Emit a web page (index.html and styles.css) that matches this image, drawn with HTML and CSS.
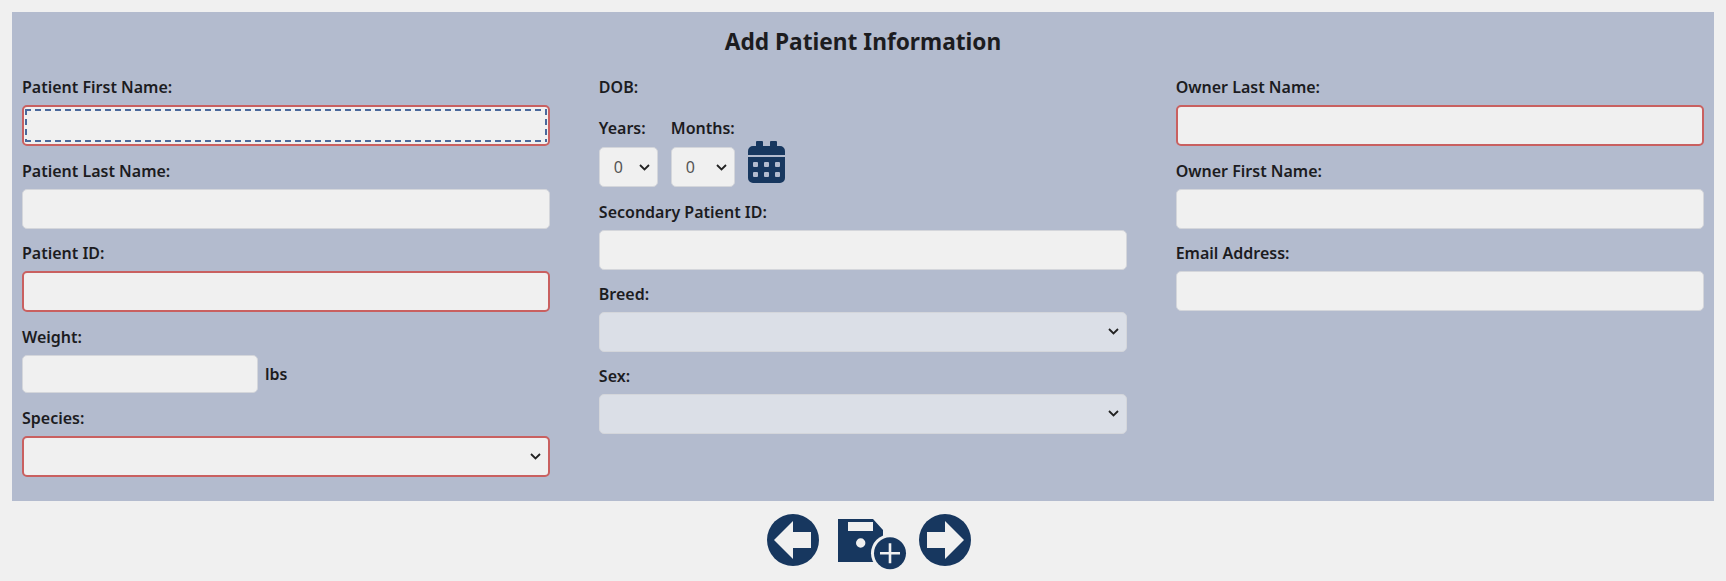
FILE: index.html
```html
<!DOCTYPE html>
<html lang="en">
<head>
    <meta charset="UTF-8">
    <title>Add Patient Information</title>
    <link rel="stylesheet" href="styles.css">
</head>
<body>
    <div class="panel">
        <h2 class="panel-title">Add Patient Information</h2>

        <div class="columns">
            <div class="column">
                <div class="field">
                    <label>Patient First Name:</label>
                    <input type="text" class="required is-focused">
                </div>
                <div class="field">
                    <label>Patient Last Name:</label>
                    <input type="text">
                </div>
                <div class="field">
                    <label>Patient ID:</label>
                    <input type="text" class="required">
                </div>
                <div class="field">
                    <label>Weight:</label>
                    <div class="weight-row">
                        <input type="text" class="weight-input">
                        <span class="unit">lbs</span>
                    </div>
                </div>
                <div class="field">
                    <label>Species:</label>
                    <select class="required"><option></option></select>
                </div>
            </div>

            <div class="column">
                <div class="field dob-title">
                    <label>DOB:</label>
                </div>
                <div class="field dob-row">
                    <div class="dob-part">
                        <label>Years:</label>
                        <select class="years"><option>0</option></select>
                    </div>
                    <div class="dob-part">
                        <label>Months:</label>
                        <select class="months"><option>0</option></select>
                    </div>
                    <svg class="calendar-icon" viewBox="0 0 37 42" aria-label="Open calendar">
                        <path fill="#17375f" fill-rule="evenodd" d="M9 0h5a1 1 0 0 1 1 1v4h7V1a1 1 0 0 1 1-1h5a1 1 0 0 1 1 1v4h3a5 5 0 0 1 5 5v4H0v-4a5 5 0 0 1 5-5h3V1a1 1 0 0 1 1-1zM0 16h37v21a5 5 0 0 1-5 5H5a5 5 0 0 1-5-5zM6 21a1 1 0 0 0-1 1v3a1 1 0 0 0 1 1h3a1 1 0 0 0 1-1v-3a1 1 0 0 0-1-1zm11 0a1 1 0 0 0-1 1v3a1 1 0 0 0 1 1h3a1 1 0 0 0 1-1v-3a1 1 0 0 0-1-1zm11 0a1 1 0 0 0-1 1v3a1 1 0 0 0 1 1h3a1 1 0 0 0 1-1v-3a1 1 0 0 0-1-1zM6 31a1 1 0 0 0-1 1v3a1 1 0 0 0 1 1h3a1 1 0 0 0 1-1v-3a1 1 0 0 0-1-1zm11 0a1 1 0 0 0-1 1v3a1 1 0 0 0 1 1h3a1 1 0 0 0 1-1v-3a1 1 0 0 0-1-1zm11 0a1 1 0 0 0-1 1v3a1 1 0 0 0 1 1h3a1 1 0 0 0 1-1v-3a1 1 0 0 0-1-1z"/>
                    </svg>
                </div>
                <div class="field">
                    <label>Secondary Patient ID:</label>
                    <input type="text">
                </div>
                <div class="field">
                    <label>Breed:</label>
                    <select class="muted"><option></option></select>
                </div>
                <div class="field">
                    <label>Sex:</label>
                    <select class="muted"><option></option></select>
                </div>
            </div>

            <div class="column">
                <div class="field">
                    <label>Owner Last Name:</label>
                    <input type="text" class="required">
                </div>
                <div class="field">
                    <label>Owner First Name:</label>
                    <input type="text">
                </div>
                <div class="field">
                    <label>Email Address:</label>
                    <input type="email">
                </div>
            </div>
        </div>
    </div>

    <div class="actions">
        <button class="icon-btn" aria-label="Back">
            <svg viewBox="0 0 52 52" width="52" height="52">
                <circle cx="26" cy="26" r="26" fill="#17375f"/>
                <path fill="#f0f0f0" d="M7 26 26 7v11h18v16H26v11z"/>
            </svg>
        </button>
        <button class="icon-btn save-btn" aria-label="Save and add">
            <svg viewBox="0 0 69 58" width="69" height="58">
                <path fill="#17375f" fill-rule="evenodd" d="M0 5h35l10 11v32H0zM10 8v9h25V8zM22.700 24.300a4.700 4.700 0 1 0 0 9.400 4.700 4.700 0 0 0 0-9.400z"/>
                <circle cx="52" cy="39.300" r="19" fill="#f0f0f0"/>
                <circle cx="52" cy="39.300" r="16" fill="#17375f"/>
                <path fill="#f0f0f0" d="M50.700 29.300h2.600v8.700H62v2.600h-8.700v8.700h-2.600v-8.700H42V38h8.700z"/>
            </svg>
        </button>
        <button class="icon-btn" aria-label="Next">
            <svg viewBox="0 0 52 52" width="52" height="52">
                <circle cx="26" cy="26" r="26" fill="#17375f"/>
                <path fill="#f0f0f0" d="M45 26 26 7v11H8v16h18v11z"/>
            </svg>
        </button>
    </div>
</body>
</html>
```

FILE: styles.css
```css
:root {
    --page-bg: #f0f0f0;
    --panel-bg: #b3bbce;
    --navy: #17375f;
    --text: #1c1c1f;
    --required: #c96060;
    --focus: #4a689b;
}

* {
    margin: 0;
    padding: 0;
    box-sizing: border-box;
}

body {
    font-family: "Noto Sans", "Open Sans", sans-serif;
    background: var(--page-bg);
    color: var(--text);
    padding: 12px;
    height: 581px;
    overflow: hidden;
}

.panel {
    background: var(--panel-bg);
    height: 489px;
    padding: 14px 10px 0;
}

.panel-title {
    font-size: 22.700px;
    font-weight: 700;
    line-height: 32px;
    text-align: center;
    margin-bottom: 18px;
}

.columns {
    display: grid;
    grid-template-columns: repeat(3, 1fr);
    column-gap: 48.500px;
}

.field {
    margin-bottom: 13.500px;
}

label {
    display: block;
    font-size: 16px;
    font-weight: 600;
    line-height: 23px;
    margin-bottom: 6px;
}

input,
select {
    display: block;
    width: 100%;
    height: 40px;
    background-color: var(--page-bg);
    border: 1px solid #d4d6db;
    border-radius: 5px;
    font-family: inherit;
    font-size: 16px;
    color: #555;
    outline: none;
}

select {
    appearance: none;
    background-image: url("data:image/svg+xml,%3Csvg xmlns='http://www.w3.org/2000/svg' width='11' height='7' viewBox='0 0 11 7'%3E%3Cpath d='M1 1l4.500 4.500L10 1' fill='none' stroke='%23222' stroke-width='1.800'/%3E%3C/svg%3E");
    background-repeat: no-repeat;
    background-position: right 7px center;
}

.required {
    border: 2px solid var(--required);
    height: 41px;
}

/* focus ring drawn with gradients, a plain dashed outline gives shorter dashes */
.is-focused {
    background-image:
        repeating-linear-gradient(90deg, var(--focus) 0 6px, transparent 6px 10px),
        repeating-linear-gradient(90deg, var(--focus) 0 6px, transparent 6px 10px),
        repeating-linear-gradient(180deg, var(--focus) 0 6px, transparent 6px 10px),
        repeating-linear-gradient(180deg, var(--focus) 0 6px, transparent 6px 10px);
    background-size:
        calc(100% - 2px) 2px,
        calc(100% - 2px) 2px,
        2px calc(100% - 4px),
        2px calc(100% - 4px);
    background-position:
        1px 2px,
        1px calc(100% - 2px),
        1px 2px,
        calc(100% - 1px) 2px;
    background-repeat: no-repeat;
}

.muted {
    background-color: #dbdfe7;
    height: 39.500px;
}

.weight-row {
    display: flex;
    align-items: center;
    gap: 7px;
}

.weight-input {
    width: 236px;
    height: 38.500px;
}

.unit {
    font-size: 16px;
    font-weight: 600;
}

.dob-title {
    margin-bottom: 18px;
}

.dob-title label {
    margin-bottom: 0;
}

.dob-row {
    display: flex;
    align-items: flex-end;
    gap: 13px;
}

.dob-part label {
    margin-bottom: 7px;
}

.years {
    width: 59px;
    padding-left: 14px;
}

.months {
    width: 64px;
    padding-left: 14px;
}

.calendar-icon {
    width: 37px;
    height: 42px;
    margin-bottom: 4px;
}

.actions {
    display: flex;
    justify-content: center;
    align-items: flex-start;
    padding: 13px 0 0 12px;
}

.icon-btn {
    background: none;
    border: none;
    cursor: pointer;
    line-height: 0;
}

.save-btn {
    margin: 0 12px 0 19px;
}
```
